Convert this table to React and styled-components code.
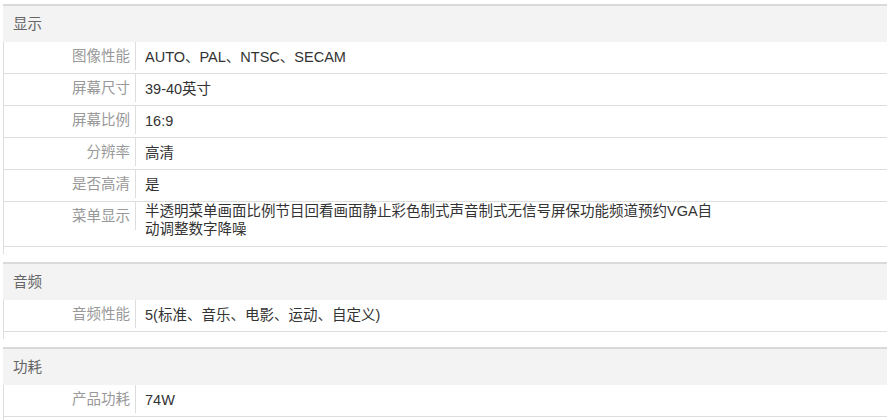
import React from "react";
import styled, { createGlobalStyle } from "styled-components";

const GlobalStyle = createGlobalStyle`
  body {
    margin: 0;
    background: #fff;
    font-family: "Liberation Sans", "Noto Sans CJK SC", sans-serif;
    font-size: 14.5px;
  }
`;

const specs = [
  {
    title: "显示",
    rows: [
      { name: "图像性能", value: "AUTO、PAL、NTSC、SECAM" },
      { name: "屏幕尺寸", value: "39-40英寸" },
      { name: "屏幕比例", value: "16:9" },
      { name: "分辨率", value: "高清" },
      { name: "是否高清", value: "是" },
      {
        name: "菜单显示",
        value:
          "半透明菜单画面比例节目回看画面静止彩色制式声音制式无信号屏保功能频道预约VGA自动调整数字降噪",
        multi: true,
      },
    ],
  },
  {
    title: "音频",
    rows: [{ name: "音频性能", value: "5(标准、音乐、电影、运动、自定义)" }],
  },
  {
    title: "功耗",
    rows: [{ name: "产品功耗", value: "74W" }],
  },
];

export default function App() {
  return (
    <>
      <GlobalStyle />
      <Page>
        {specs.map((group) => (
          <Section key={group.title}>
            <Header>{group.title}</Header>
            <Body>
              {group.rows.map((row) => (
                <Row key={row.name}>
                  <Label>{row.name}</Label>
                  <Value $multi={row.multi}>{row.value}</Value>
                </Row>
              ))}
            </Body>
          </Section>
        ))}
      </Page>
    </>
  );
}

const Page = styled.div`
  padding: 4px 5px 0 3px;
`;

const Section = styled.section`
  margin-bottom: 8px;
`;

const Header = styled.div`
  height: 36px;
  line-height: 36px;
  padding-left: 10px;
  background: #f3f3f3;
  border-top: 2px solid #dadada;
  color: #666;
`;

const Body = styled.div`
  border-left: 1px solid #dddddd;
  padding-bottom: 7px;
`;

const Row = styled.div`
  display: flex;
  align-items: flex-start;
  min-height: 31px;
  border-bottom: 1px solid #dddddd;
`;

const Label = styled.div`
  flex-shrink: 0;
  width: 126px;
  padding-right: 5px;
  text-align: right;
  line-height: 28px;
  color: #999;
  border-right: 1px solid #dddddd;
`;

const Value = styled.div`
  max-width: 572px;
  padding-left: 9px;
  color: #333;
  line-height: ${(p) => (p.$multi ? "18px" : "31px")};
  padding-bottom: ${(p) => (p.$multi ? "8px" : "0")};
`;
